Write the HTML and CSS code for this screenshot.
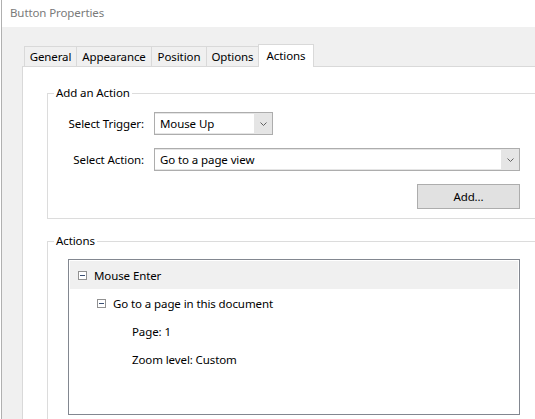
FILE: index.html
```html
<!DOCTYPE html>
<html>
<head>
<meta charset="utf-8">
<title>Button Properties</title>
<link rel="stylesheet" href="styles.css">
</head>
<body>
<div class="window">
  <div class="titlebar">Button Properties</div>
  <div class="client">
    <div class="tabs">
      <div class="tab w-general">General</div>
      <div class="tab w-appearance">Appearance</div>
      <div class="tab w-position">Position</div>
      <div class="tab w-options">Options</div>
      <div class="tab w-actions active">Actions</div>
    </div>
    <div class="panel">
      <fieldset class="group g-add">
        <legend>Add an Action</legend>
        <div class="form">
          <label class="lbl">Select Trigger:</label>
          <div class="combo c-trigger">
            <span class="field">Mouse Up</span>
            <span class="arrow"><svg width="7" height="4" viewBox="0 0 7 4"><polyline points="0.5,0.5 3.5,3.5 6.5,0.5" fill="none" stroke="#606060" stroke-width="1"/></svg></span>
          </div>
          <label class="lbl">Select Action:</label>
          <div class="combo c-action">
            <span class="field">Go to a page view</span>
            <span class="arrow"><svg width="7" height="4" viewBox="0 0 7 4"><polyline points="0.5,0.5 3.5,3.5 6.5,0.5" fill="none" stroke="#606060" stroke-width="1"/></svg></span>
          </div>
          <span class="spacer"></span>
          <button class="btn" type="button">Add...</button>
        </div>
      </fieldset>
      <fieldset class="group g-actions">
        <legend>Actions</legend>
        <div class="tree">
          <div class="row lvl0 selected">
            <svg class="exp" width="9" height="9" viewBox="0 0 9 9"><rect x="0.5" y="0.5" width="8" height="8" fill="#fff" stroke="#919191"/><line x1="2" y1="4.5" x2="7" y2="4.5" stroke="#3a4f73"/></svg>
            <span>Mouse Enter</span>
          </div>
          <div class="row lvl1">
            <svg class="exp" width="9" height="9" viewBox="0 0 9 9"><rect x="0.5" y="0.5" width="8" height="8" fill="#fff" stroke="#919191"/><line x1="2" y1="4.5" x2="7" y2="4.5" stroke="#3a4f73"/></svg>
            <span>Go to a page in this document</span>
          </div>
          <div class="row lvl2"><span>Page: 1</span></div>
          <div class="row lvl2"><span>Zoom level: Custom</span></div>
        </div>
      </fieldset>
    </div>
  </div>
</div>
</body>
</html>
```

FILE: styles.css
```css
html, body {
  margin: 0;
  height: 100%;
  overflow: hidden;
}
body {
  font-family: "Noto Sans", "DejaVu Sans", sans-serif;
  font-size: 11.5px;
  letter-spacing: -0.1px;
  color: #000;
  background: #fff;
}
.window {
  height: 419px;
  margin-left: 1px;
  border-left: 1px solid #b0b0b0;
  display: flex;
  flex-direction: column;
  background: #f0f0f0;
}
.titlebar {
  height: 27px;
  flex: none;
  background: #fff;
  color: #7a7a7a;
  padding-left: 8px;
  line-height: 26px;
}
.client {
  flex: 1;
  min-height: 0;
  display: flex;
  flex-direction: column;
  padding: 17px 0 0 20px;
}
.tabs {
  display: flex;
  align-items: flex-end;
  height: 22px;
  margin-left: 2px;
  flex: none;
}
.tab {
  box-sizing: border-box;
  height: 20px;
  border: 1px solid #d9d9d9;
  border-bottom: none;
  background: #f0f0f0;
  text-align: center;
  line-height: 19px;
  margin-left: -1px;
}
.tab:first-child { margin-left: 0; }
.w-general { width: 53px; }
.w-appearance { width: 76px; }
.w-position { width: 56px; }
.w-options { width: 53px; }
.w-actions { width: 56px; }
.tab.active {
  height: 23px;
  margin-bottom: -1px;
  background: #fff;
  line-height: 21px;
  position: relative;
  z-index: 1;
}
.panel {
  flex: 1;
  min-height: 0;
  background: #fff;
  border-top: 1px solid #d9d9d9;
  border-left: 1px solid #d9d9d9;
  padding-left: 24px;
  overflow: hidden;
}
.group {
  margin: 0;
  padding: 0;
  border: 1px solid #dcdcdc;
  width: 520px;
  box-sizing: border-box;
  min-width: 0;
}
.group legend {
  padding: 0 2px;
  margin-left: 6px;
  line-height: 16px;
}
.g-add {
  margin-top: 18px;
}
.form {
  display: grid;
  grid-template-columns: 96px 366px;
  column-gap: 10px;
  row-gap: 13px;
  padding: 11px 0 9px 0;
}
.lbl {
  text-align: right;
  align-self: center;
}
.combo {
  box-sizing: border-box;
  height: 23px;
  display: flex;
  border: 1px solid #adadad;
  background: #e5e5e5;
}
.c-trigger { width: 119px; }
.c-action { width: 366px; }
.field {
  flex: 1;
  background: #fff;
  margin: 1px 0 1px 0;
  padding-left: 5px;
  line-height: 19px;
  white-space: nowrap;
}
.arrow {
  width: 18px;
  display: flex;
  align-items: center;
  justify-content: center;
}
.btn {
  grid-column: 2;
  justify-self: end;
  width: 103px;
  height: 25px;
  box-sizing: border-box;
  border: 1px solid #adadad;
  background: #e1e1e1;
  font: inherit;
  letter-spacing: inherit;
  color: #000;
  padding: 0;
}
.spacer { display: block; }
.g-actions {
  margin-top: 14px;
  height: 200px;
}
.tree {
  box-sizing: border-box;
  width: 452px;
  height: 156px;
  margin: 10px 0 0 20px;
  border: 1px solid #828790;
  padding: 1px;
  background: #fff;
}
.row {
  height: 28px;
  display: flex;
  align-items: center;
  white-space: nowrap;
}
.row.selected { background: #f0f0f0; }
.exp { flex: none; margin-right: 7px; }
.lvl0 { padding-left: 8px; }
.lvl1 { padding-left: 27px; }
.lvl2 { padding-left: 62px; }
```
